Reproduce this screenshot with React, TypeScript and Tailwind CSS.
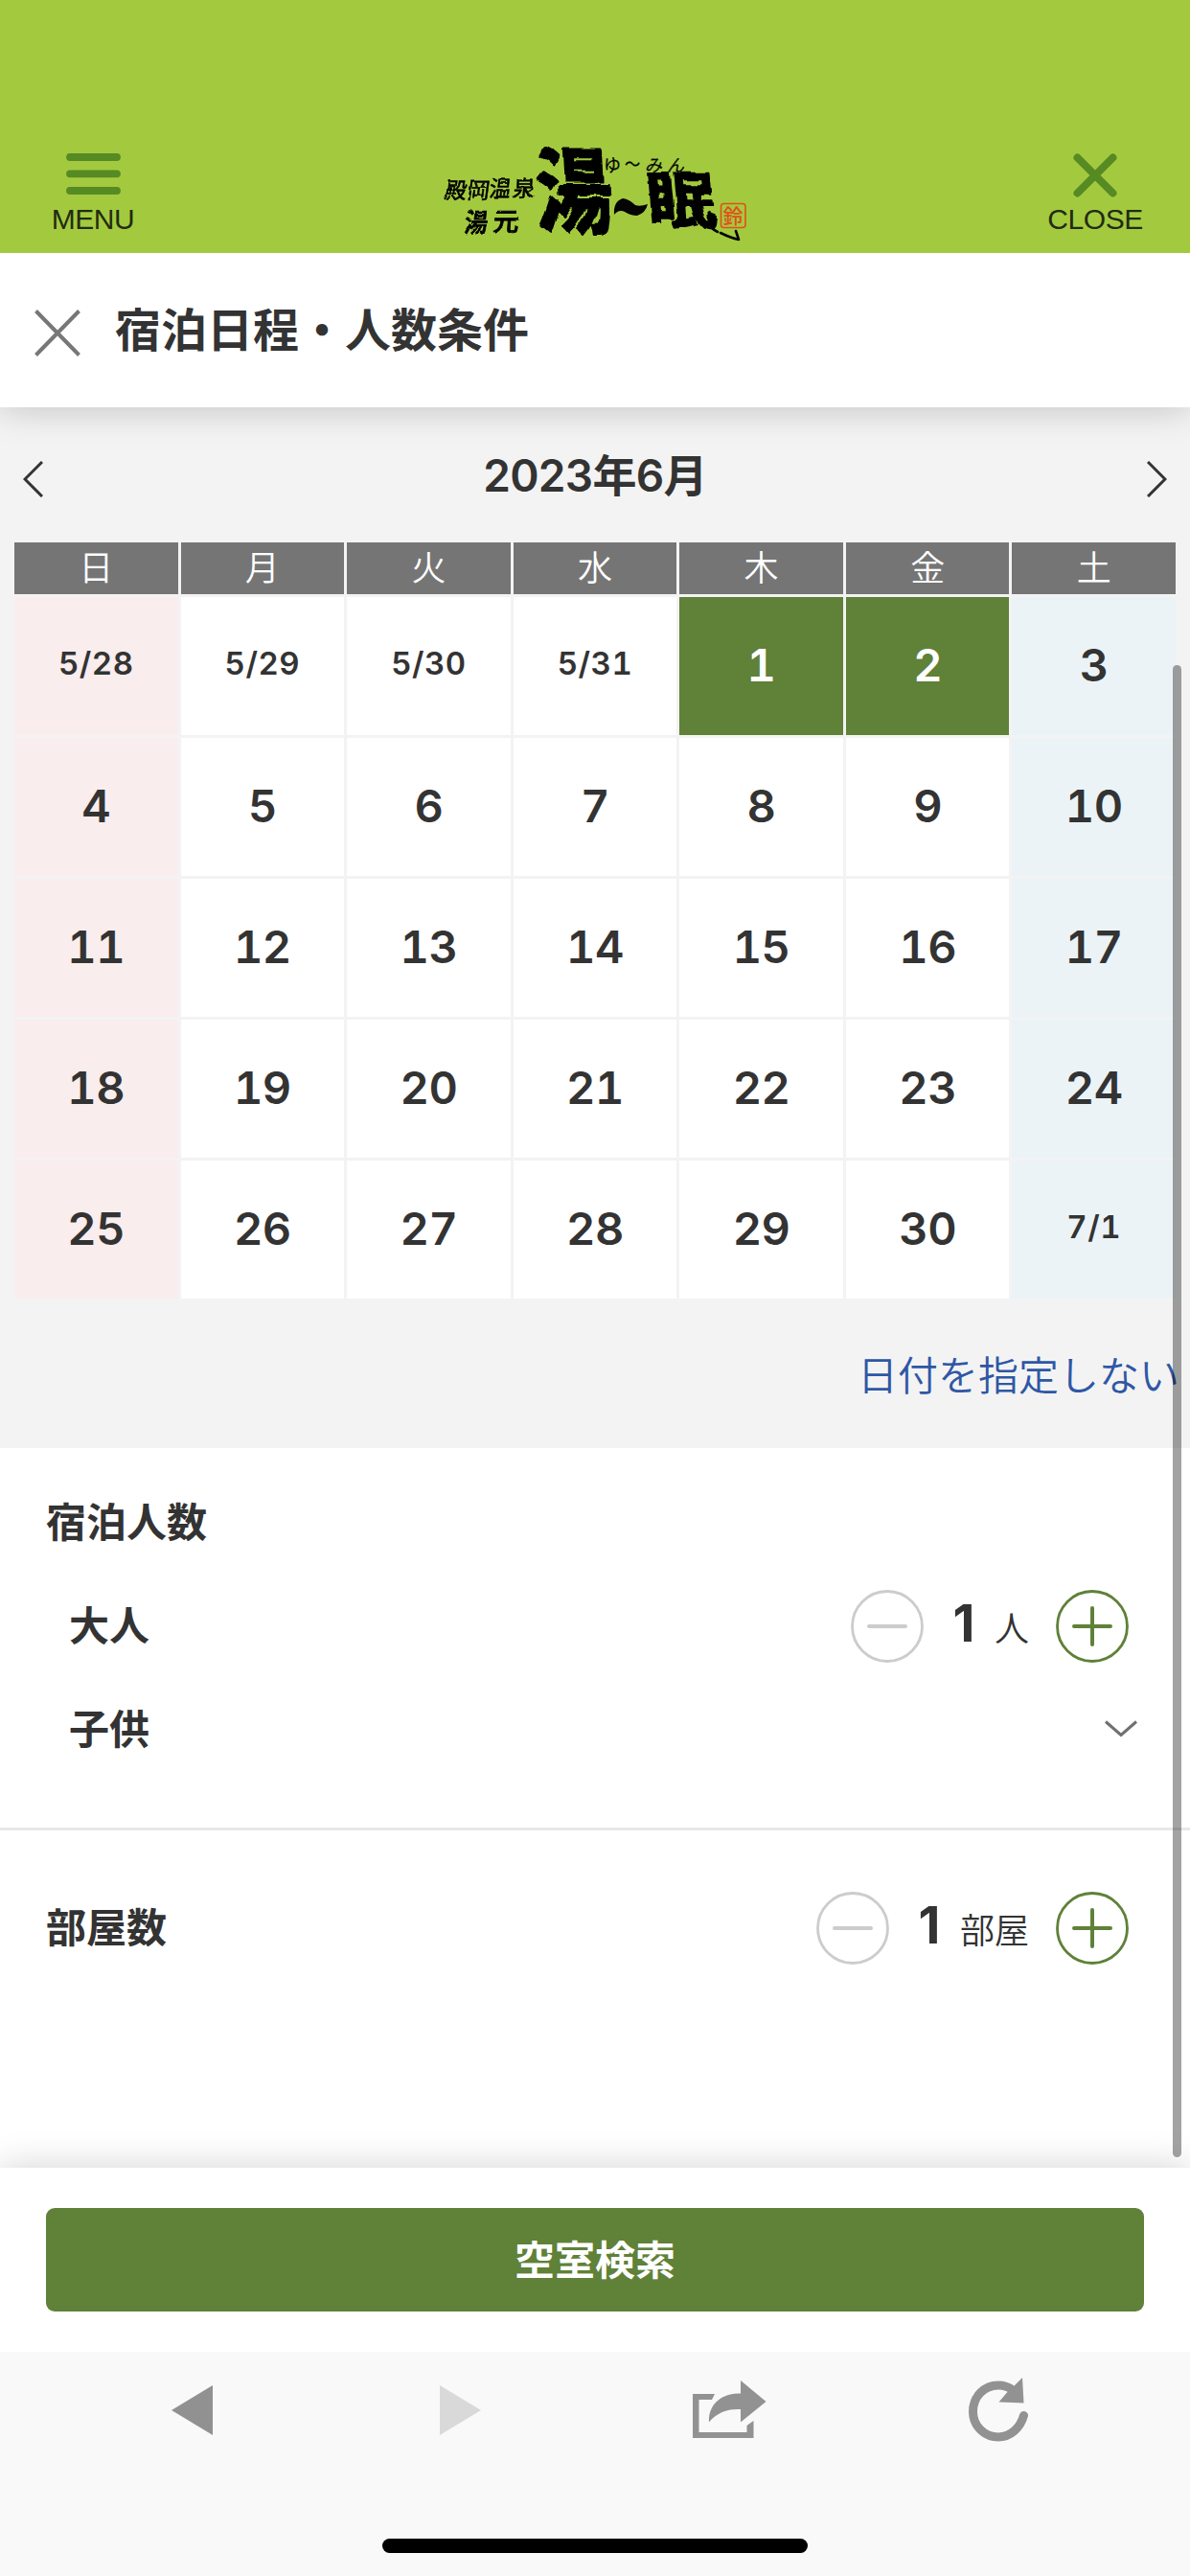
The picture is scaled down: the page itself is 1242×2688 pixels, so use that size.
import { useState } from 'react';
import clsx from 'clsx';

const weekdays = ['日', '月', '火', '水', '木', '金', '土'];

const days = [
    '5/28', '5/29', '5/30', '5/31', '1', '2', '3',
    '4', '5', '6', '7', '8', '9', '10',
    '11', '12', '13', '14', '15', '16', '17',
    '18', '19', '20', '21', '22', '23', '24',
    '25', '26', '27', '28', '29', '30', '7/1',
];

function Logo() {
    return (
        <svg className="w-[360px] h-[130px] overflow-visible" viewBox="0 0 360 130" fontFamily="'Noto Sans CJK JP', sans-serif" fill="#050505" stroke="#050505">
            {/* roughens the edges like a brush */}
            <filter id="brush" x="-5%" y="-5%" width="110%" height="110%">
                <feTurbulence type="fractalNoise" baseFrequency="0.05" numOctaves="2" seed="4" />
                <feDisplacementMap in="SourceGraphic" scale="8" xChannelSelector="R" yChannelSelector="G" />
            </filter>
            <filter id="brush-thin" x="-5%" y="-5%" width="110%" height="110%">
                <feTurbulence type="fractalNoise" baseFrequency="0.12" numOctaves="1" seed="2" />
                <feDisplacementMap in="SourceGraphic" scale="3" xChannelSelector="R" yChannelSelector="G" />
            </filter>
            <g filter="url(#brush-thin)">
                <g fontSize="23" fontWeight="400" strokeWidth="0.6">
                    <text transform="translate(24 73) skewX(-8)">殿</text>
                    <text transform="translate(48 73) skewX(-8)">岡</text>
                    <text transform="translate(71 71) skewX(-6)">温</text>
                    <text transform="translate(96 71) skewX(-4)">泉</text>
                </g>
                <g fontSize="27" fontWeight="500" strokeWidth="0.8">
                    <text transform="translate(45 108) skewX(-6) scale(0.9 1)">湯</text>
                    <text transform="translate(75 107) skewX(-4)">元</text>
                </g>
            </g>
            <g filter="url(#brush)">
                <text transform="translate(123 102) skewX(3) scale(0.8 1)" fontSize="98" fontWeight="700" strokeWidth="2.500" strokeLinejoin="round">湯</text>
                <text transform="translate(238 99) skewX(5) scale(1.1 1)" fontSize="65" fontWeight="700" strokeWidth="1.500" strokeLinejoin="round">眠</text>
            </g>
            <path d="M202 90Q201 76 211 73Q218 74 224 80Q229 82 237 79Q235 88 226 91Q219 91 213 87Q207 84 202 90Z" stroke="none" />
            <g fontSize="18" fontWeight="400" strokeWidth="0.3">
                <text transform="translate(191 45)">ゆ</text>
                <text transform="translate(213 44) scale(0.9 1)">〜</text>
                <text transform="translate(234 45) skewX(-12)">み</text>
                <text transform="translate(257 45) skewX(-12)">ん</text>
            </g>
            <path d="M301 102Q306 106 310 108M313 109Q323 114 332 116L329 107" fill="none" strokeWidth="2.600" strokeLinecap="round" strokeLinejoin="round" />
            <g stroke="#e0501c" fill="none">
                <rect x="313.500" y="78.500" width="25.500" height="25" rx="3" strokeWidth="1.600" />
                <text x="315.500" y="98.500" fontSize="21" fontWeight="500" fill="#e0501c" stroke="none">鈴</text>
            </g>
        </svg>
    );
}

interface CounterProps {
    value: number;
    unit: string;
    onChange: (value: number) => void;
}

function Counter({ value, unit, onChange }: CounterProps) {
    return (
        <div className="flex items-center">
            <button type="button" className="w-[76px] h-[76px]" onClick={() => onChange(Math.max(1, value - 1))}>
                <svg viewBox="0 0 76 76" fill="none" stroke="#cccccc" strokeLinecap="round">
                    <circle cx="38" cy="38" r="36.500" strokeWidth="2.800" />
                    <path d="M19 38H57" strokeWidth="4" />
                </svg>
            </button>
            <div className="flex items-baseline mr-7 -mt-1">
                <span className="w-[74px] pl-2.5 text-center font-['Inter'] font-bold text-[53px] leading-[60px]">{value}</span>
                <span className="font-[350] text-4xl leading-[60px]">{unit}</span>
            </div>
            <button type="button" className="w-[76px] h-[76px]" onClick={() => onChange(value + 1)}>
                <svg viewBox="0 0 76 76" fill="none" stroke="#5f8138" strokeLinecap="round">
                    <circle cx="38" cy="38" r="36.500" strokeWidth="2.800" />
                    <path d="M19 38H57M38 19V57" strokeWidth="4" />
                </svg>
            </button>
        </div>
    );
}

export default function App() {
    const [adults, setAdults] = useState(1);
    const [rooms, setRooms] = useState(1);

    return (
        <main className="relative flex flex-col w-[1242px] h-[2688px] overflow-hidden bg-white text-[#333333] font-['Noto_Sans_CJK_JP',sans-serif]">
            <header className="flex justify-between items-end h-[264px] shrink-0 bg-[#a3ca3f] px-[37px]">
                <button type="button" className="flex flex-col items-center w-[120px] h-[104px] text-[#222b12]">
                    <svg className="w-[57px] h-[46px]" viewBox="0 0 57 46" stroke="#568a23" strokeWidth="7.800" strokeLinecap="round">
                        <path d="M4 4H53M4 21.300H53M4 39H53" />
                    </svg>
                    <span className="mt-1.5 font-['Liberation_Sans'] text-[30px] leading-[34px] tracking-[-0.4px]">MENU</span>
                </button>
                <Logo />
                <button type="button" className="flex flex-col items-center w-[124px] h-[104px] text-[#222b12]">
                    <svg className="w-[46px] h-[46px]" viewBox="0 0 46 46" stroke="#568a23" strokeWidth="8" strokeLinecap="round">
                        <path d="M4.500 4.500L41.500 41.500M41.500 4.500L4.500 41.500" />
                    </svg>
                    <span className="mt-1.5 font-['Liberation_Sans'] text-[30px] leading-[34px] tracking-[-0.4px]">CLOSE</span>
                </button>
            </header>

            <div className="relative z-10 flex items-center h-[161px] shrink-0 bg-white pl-9 shadow-[0_0_36px_rgba(0,0,0,0.22)] [clip-path:inset(0_0_-60px_0)]">
                <svg className="w-[48px] h-[49px] mt-[6px]" viewBox="0 0 48 49" stroke="#777777" strokeWidth="4">
                    <path d="M1.500 1.500L46.500 47.500M46.500 1.500L1.500 47.500" />
                </svg>
                <h1 className="ml-9 -mt-2 font-bold text-5xl leading-[60px]">宿泊日程・人数条件</h1>
            </div>

            <section className="h-[1086px] shrink-0 bg-[#f3f3f3] px-[15px]">
                <div className="flex items-center justify-between h-[141px] px-[9px]">
                    <svg className="w-[21px] h-[38px] mt-[9px]" viewBox="0 0 21 38" fill="none" stroke="#333333" strokeWidth="3">
                        <path d="M20 1L2 19L20 37" />
                    </svg>
                    <h2 className="font-['Inter','Noto_Sans_CJK_JP'] font-semibold text-[46px] leading-[60px] tracking-[-0.7px]">2023年6月</h2>
                    <svg className="w-[21px] h-[38px] mt-[9px]" viewBox="0 0 21 38" fill="none" stroke="#333333" strokeWidth="3">
                        <path d="M1 1L19 19L1 37" />
                    </svg>
                </div>
                <div className="grid grid-cols-7 gap-[3px]">
                    {weekdays.map(w => (
                        <div key={w} className="h-[54px] bg-[#757575] text-white text-center font-[350] text-4xl leading-[48px]">{w}</div>
                    ))}
                    {days.map((day, i) => {
                        const selected = day === '1' || day === '2';
                        return (
                            <button
                                type="button"
                                key={day}
                                className={clsx(
                                    "flex items-center justify-center h-[144px] font-['Inter'] font-semibold tabular-nums",
                                    day.includes('/') ? 'text-[33px] pb-1 tracking-[0.5px]' : 'text-[47px] pb-0.5 tracking-[-0.5px]',
                                    selected && 'bg-[#5f8138] text-white',
                                    !selected && i % 7 === 0 && 'bg-[#f9eded]',
                                    !selected && i % 7 === 6 && 'bg-[#ebf3f7]',
                                    !selected && i % 7 !== 0 && i % 7 !== 6 && 'bg-white',
                                )}
                            >
                                {day}
                            </button>
                        );
                    })}
                </div>
                <div className="flex justify-end pt-[48px] -mr-1">
                    <a href="#" className="font-[350] text-[42px] leading-[60px] text-[#2f57a5]">日付を指定しない</a>
                </div>
            </section>

            <section className="h-[399px] shrink-0 border-b-[3px] border-[#e8e8e8] pl-12 pr-16 pt-[45px] font-bold text-[42px] leading-[60px]">
                <h3>宿泊人数</h3>
                <div className="flex items-center justify-between h-[76px] mt-[43px] pl-6">
                    <span className="-mt-1.5">大人</span>
                    <Counter value={adults} unit="人" onChange={setAdults} />
                </div>
                <div className="flex items-center justify-between mt-[37px] pl-6">
                    <span>子供</span>
                    <svg className="w-[34px] h-[18px] mt-1 -mr-[9px]" viewBox="0 0 34 18" fill="none" stroke="#707070" strokeWidth="3">
                        <path d="M1 1.500L17 15.500L33 1.500" />
                    </svg>
                </div>
            </section>

            <section className="flex items-start justify-between h-[352px] shrink-0 pl-12 pr-16 pt-[64px] font-bold text-[42px] leading-[60px]">
                <h3 className="mt-[5px]">部屋数</h3>
                <Counter value={rooms} unit="部屋" onChange={setRooms} />
            </section>

            <div className="flex items-center h-[192px] shrink-0 bg-white px-12 shadow-[0_0_36px_rgba(0,0,0,0.18)] [clip-path:inset(-60px_0_0_0)]">
                <button type="button" className="w-full h-[108px] rounded-[9px] bg-[#5f8138] pb-1.5 text-white font-bold text-[42px]">空室検索</button>
            </div>

            <nav className="flex flex-col items-center justify-between h-[234px] shrink-0 bg-[#f9f9f9] pt-[27px] pb-6">
                <div className="flex items-center w-full h-[67px] pl-[179px]">
                    <svg className="w-[43px] h-[52px]" viewBox="0 0 43 52" fill="#919191">
                        <path d="M0 26L43 0V52Z" />
                    </svg>
                    <svg className="w-[43px] h-[52px] ml-[237px]" viewBox="0 0 43 52" fill="#d9d9d9">
                        <path d="M43 26L0 0V52Z" />
                    </svg>
                    <svg className="w-[77px] h-[61px] ml-[221px]" viewBox="0 0 77 61" fill="#929292">
                        <path d="M0 14H23L20 20H6.500V54H56.500V47L63.500 42V60H0Z" />
                        <path d="M50 0L76.500 22L50 43.500V30C35 29 24 35 17 43.500C16 25 30 13 50 13.500Z" />
                    </svg>
                    <svg className="w-[62px] h-[67px] ml-[211px]" viewBox="0 0 62 67">
                        <path d="M57.500 39.500C54 52 44 62 31 62C16 62 4.500 50 4.500 35.500C4.500 20 16 8 31 8C37 8 42 10 46 13" fill="none" stroke="#929292" strokeWidth="9" strokeLinecap="round" />
                        <path d="M56 0L57.500 26.500L31.500 25.500L40 15.500L47.500 8.500Z" fill="#929292" />
                    </svg>
                </div>
                <div className="w-[444px] h-[15px] rounded-full bg-black" />
            </nav>

            {/* scroll indicator */}
            <div className="absolute z-20 top-[694px] right-[9px] w-[9px] h-[1557px] rounded-full bg-black/36" />
        </main>
    );
}
